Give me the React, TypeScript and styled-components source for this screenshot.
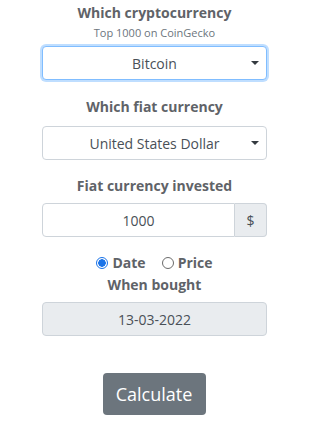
import React, { useState } from "react";
import styled, { createGlobalStyle } from "styled-components";

const GlobalStyle = createGlobalStyle`
  html, body {
    margin: 0;
    padding: 0;
    background: #ffffff;
    font-family: "Open Sans", "Noto Sans", Arial, sans-serif;
  }
  * { box-sizing: border-box; }
`;

const Form = styled.form`
  width: 225px;
  margin-left: 42px;
  padding-top: 4px;
  display: flex;
  flex-direction: column;
  align-items: stretch;
  text-align: center;
`;

const Label = styled.div`
  font-size: 14px;
  font-weight: 700;
  color: #5f6368;
  line-height: 18px;
`;

const Hint = styled.div`
  font-size: 11px;
  color: #6c757d;
  line-height: 14px;
  margin-top: 4px;
`;

const Field = styled.div<{ $top: number }>`
  margin-top: ${(p) => p.$top}px;
`;

const SelectBox = styled.div<{ $focus?: boolean }>`
  position: relative;
  height: 34px;
  border: 1px solid ${(p) => (p.$focus ? "#80bdff" : "#ced4da")};
  border-radius: 4px;
  box-shadow: ${(p) => (p.$focus ? "0 0 0 2px rgba(0,123,255,.25)" : "none")};
  display: flex;
  align-items: center;
  justify-content: center;
  font-size: 14px;
  color: #495057;
  background: #fff;
`;

const Caret = styled.span`
  position: absolute;
  right: 7px;
  top: 14px;
  width: 0;
  height: 0;
  border-left: 4px solid transparent;
  border-right: 4px solid transparent;
  border-top: 4px solid #343a40;
`;

const InputGroup = styled.div`
  display: flex;
  height: 34px;
`;

const TextInput = styled.div`
  flex: 1;
  border: 1px solid #ced4da;
  border-radius: 4px 0 0 4px;
  display: flex;
  align-items: center;
  justify-content: center;
  font-size: 14px;
  color: #495057;
`;

const Addon = styled.div`
  width: 32px;
  border: 1px solid #ced4da;
  border-left: none;
  border-radius: 0 4px 4px 0;
  background: #e9ecef;
  display: flex;
  align-items: center;
  justify-content: center;
  font-size: 14px;
  color: #495057;
`;

const Radios = styled.div`
  display: flex;
  justify-content: center;
  gap: 16px;
  font-size: 14px;
  font-weight: 700;
  color: #5f6368;
`;

const RadioLabel = styled.label`
  display: flex;
  align-items: center;
  gap: 4px;
  cursor: pointer;
`;

const Dot = styled.span<{ $on: boolean }>`
  width: 12px;
  height: 12px;
  border-radius: 50%;
  border: 1px solid ${(p) => (p.$on ? "#1a73e8" : "#6b6b6b")};
  background: ${(p) =>
    p.$on ? "radial-gradient(circle, #1a73e8 0 3.5px, #fff 4px)" : "#fff"};
`;

const DateBox = styled.div`
  height: 34px;
  border: 1px solid #ced4da;
  border-radius: 4px;
  background: #e9ecef;
  display: flex;
  align-items: center;
  justify-content: center;
  font-size: 14px;
  color: #495057;
`;

const Button = styled.button`
  align-self: center;
  margin-top: 37px;
  margin-left: -1px;
  width: 103px;
  height: 42px;
  border: none;
  border-radius: 4px;
  background: #6c757d;
  color: #fff;
  font-family: inherit;
  font-size: 18px;
`;

const App = () => {
  const [mode, setMode] = useState<"date" | "price">("date");

  return (
    <>
      <GlobalStyle />
      <Form onSubmit={(e) => e.preventDefault()}>
        <Label>Which cryptocurrency</Label>
        <Hint>Top 1000 on CoinGecko</Hint>
        <Field $top={6}>
          <SelectBox $focus>
            Bitcoin
            <Caret />
          </SelectBox>
        </Field>
        <Field $top={18}>
          <Label>Which fiat currency</Label>
        </Field>
        <Field $top={10}>
          <SelectBox>
            United States Dollar
            <Caret />
          </SelectBox>
        </Field>
        <Field $top={17}>
          <Label>Fiat currency invested</Label>
        </Field>
        <Field $top={8}>
          <InputGroup>
            <TextInput>1000</TextInput>
            <Addon>$</Addon>
          </InputGroup>
        </Field>
        <Field $top={16}>
          <Radios>
            <RadioLabel onClick={() => setMode("date")}>
              <Dot $on={mode === "date"} />
              Date
            </RadioLabel>
            <RadioLabel onClick={() => setMode("price")}>
              <Dot $on={mode === "price"} />
              Price
            </RadioLabel>
          </Radios>
        </Field>
        <Field $top={4}>
          <Label>When bought</Label>
        </Field>
        <Field $top={8}>
          <DateBox>13-03-2022</DateBox>
        </Field>
        <Button type="submit">Calculate</Button>
      </Form>
    </>
  );
};

export default App;
